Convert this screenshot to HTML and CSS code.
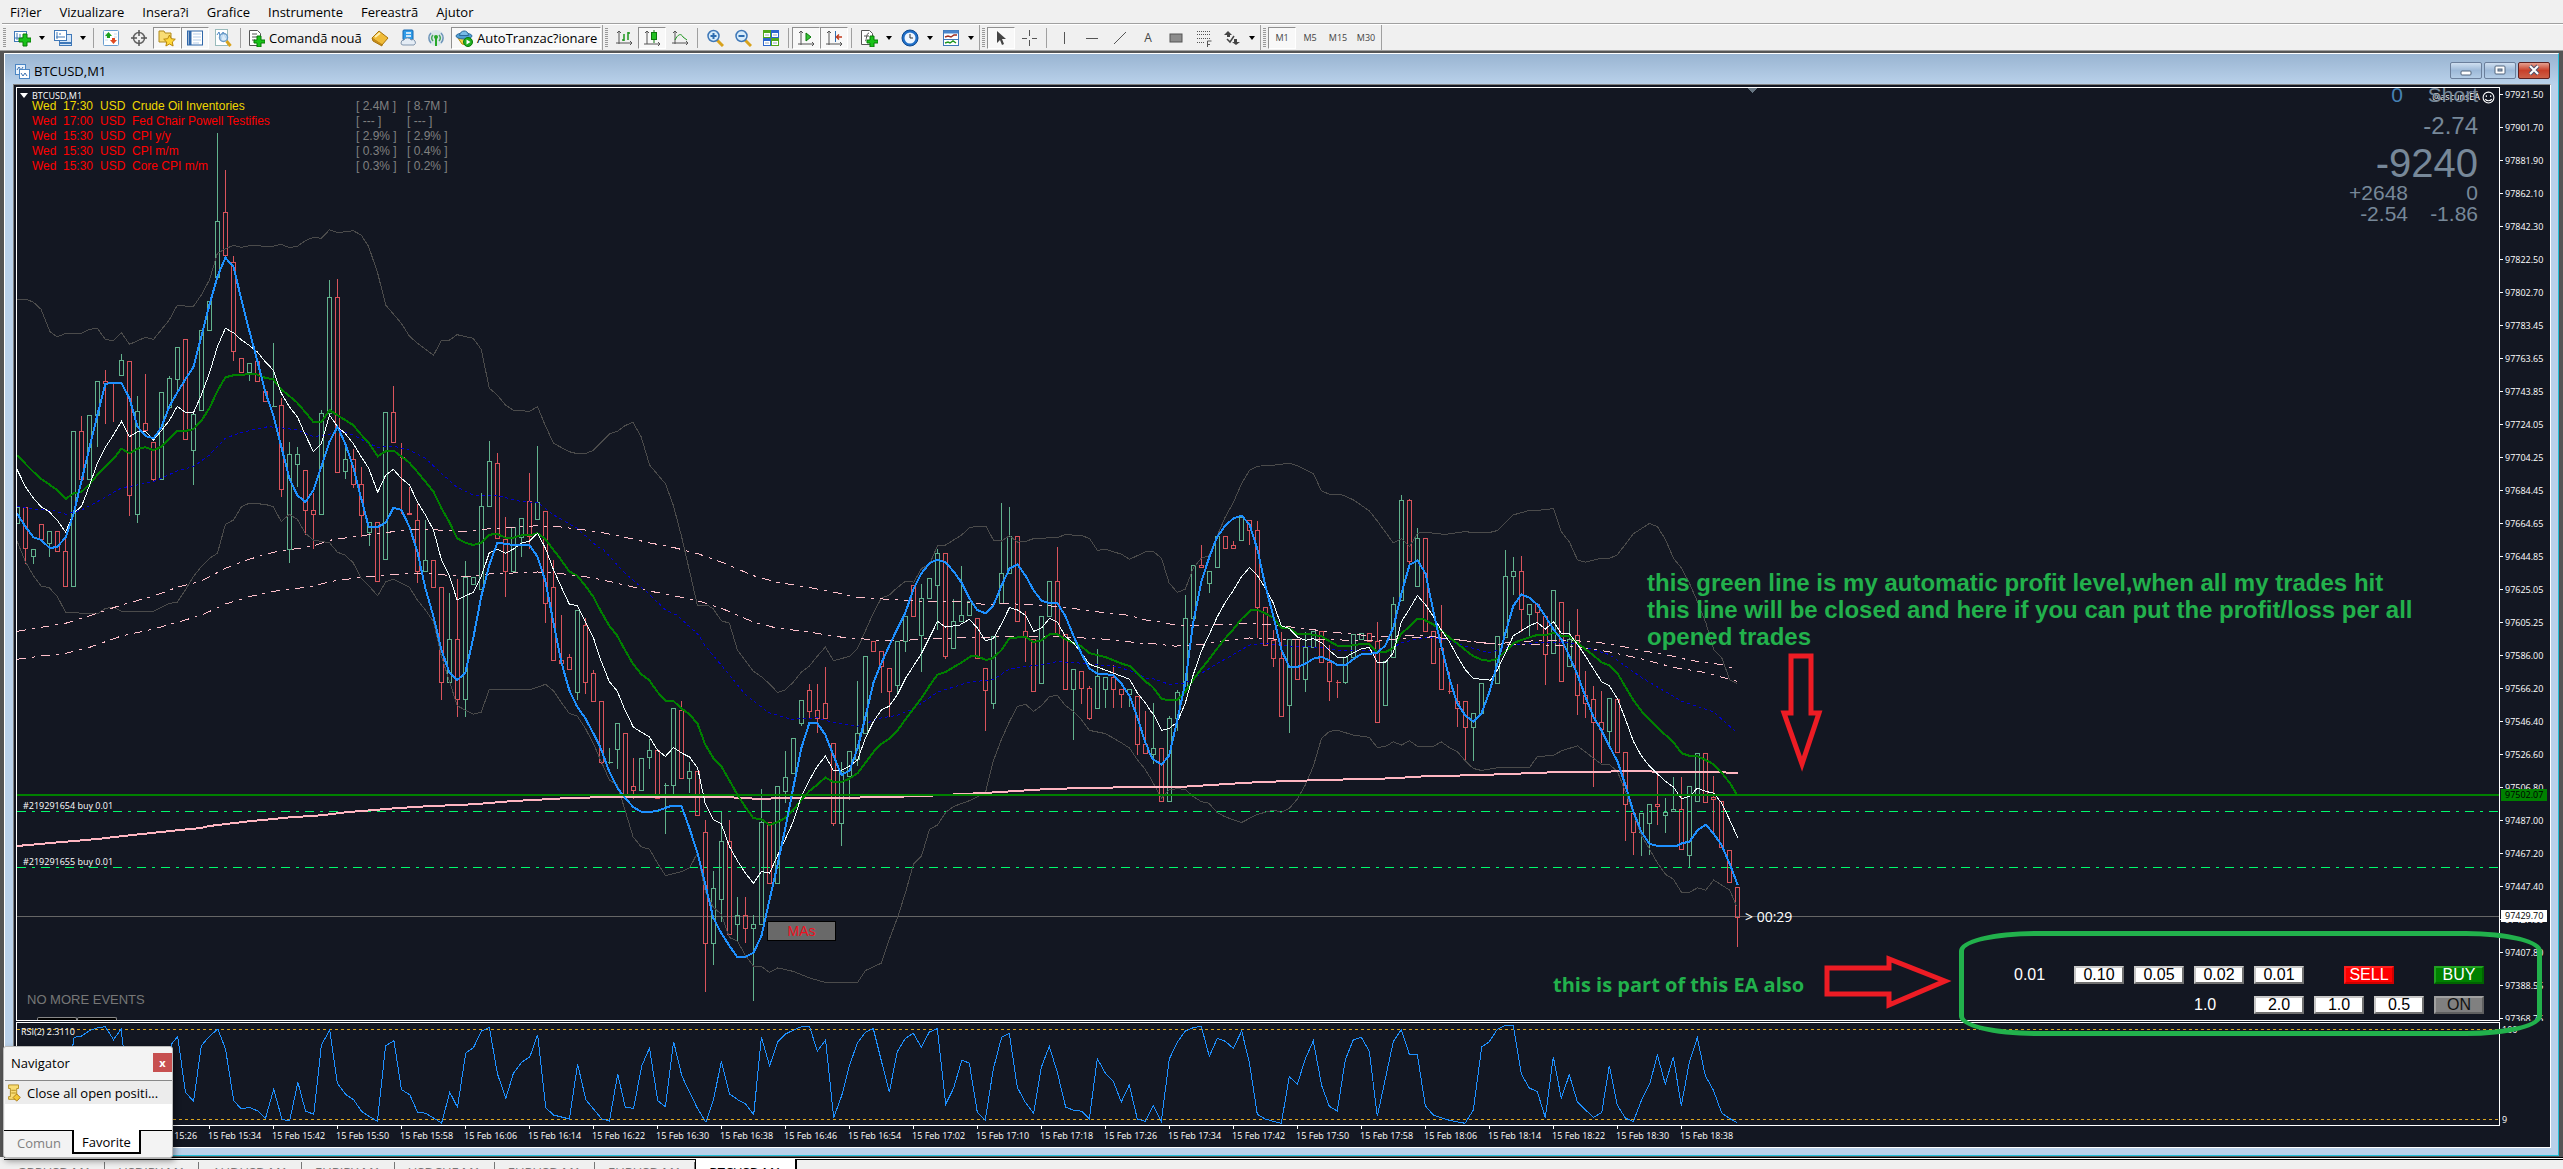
FILE: index.html
```html
<!DOCTYPE html>
<html lang="ro">
<head>
<meta charset="utf-8">
<title>BTCUSD,M1</title>
<link rel="stylesheet" href="styles.css">
</head>
<body>
<nav class="menu">
  <a href="#">Fi?ier</a><a href="#">Vizualizare</a><a href="#">Insera?i</a><a href="#">Grafice</a><a href="#">Instrumente</a><a href="#">Fereastrã</a><a href="#">Ajutor</a>
</nav>

<div class="toolbar">
  <i class="grip"></i>
  <button class="tool" aria-label="New chart"><svg viewBox="0 0 18 18"><rect x="1.500" y="2.500" width="12" height="10" fill="#fff" stroke="#3f78b8"/><path d="M4 4v7M2 9h10M7 5v3" stroke="#3f78b8" fill="none"/><path d="M10 5h4v4h4v4h-4v4h-4v-4H6V9h4z" fill="#19c219" stroke="#087808"/></svg></button><button class="drop" aria-label="More"></button>
  <button class="tool" aria-label="Profiles"><svg viewBox="0 0 18 18"><rect x="5.500" y="5.500" width="12" height="11" fill="#d5e6f8" stroke="#3f78b8"/><path d="M6 14h11" stroke="#3f78b8" stroke-width="2"/><rect x=".5" y="1.500" width="12" height="10" fill="#fff" stroke="#3f78b8"/><path d="M3 3v7M2 8h9M6 4v2" stroke="#3f78b8" fill="none"/></svg></button><button class="drop" aria-label="More"></button>
  <i class="sep"></i>
  <button class="tool" aria-label="Market watch"><svg viewBox="0 0 18 18"><rect x="1.500" y="1.500" width="15" height="15" rx="1" fill="#fff" stroke="#6a9fd0"/><path d="M3 5h3M3 8h3M3 11h3M12 5h3M12 8h3" stroke="#c8dcf0"/><path d="M6.500 3L10 7H8v2H5V7H3z" fill="#1da01d"/><path d="M11.500 15L8 11h2V9h3v2h2z" fill="#e04a20"/></svg></button>
  <button class="tool" aria-label="Crosshair"><svg viewBox="0 0 18 18"><circle cx="9" cy="9" r="5.500" fill="none" stroke="#666" stroke-width="1.500"/><path d="M9 1v6M9 11v6M1 9h6M11 9h6" stroke="#555" stroke-width="1.500"/></svg></button>
  <button class="tool on" aria-label="Navigator"><svg viewBox="0 0 18 18"><path d="M1 2h5l1 2h6v9H1z" fill="#f9dd74" stroke="#b08a1c"/><path d="M11.500 6l1.800 3.700 4 .5-3 2.800.8 4-3.600-2-3.600 2 .8-4-3-2.800 4-.5z" fill="#ffd83a" stroke="#b8860b"/></svg></button>
  <button class="tool on" aria-label="Terminal"><svg viewBox="0 0 18 18"><rect x="1.500" y="2" width="15" height="14" fill="#fff" stroke="#2f66a8"/><path d="M4 2v14" stroke="#2f66a8" stroke-width="3"/><path d="M7 5h8M7 8h8M7 11h8M7 14h6" stroke="#b5cde8"/></svg></button>
  <button class="tool" aria-label="Strategy tester"><svg viewBox="0 0 18 18"><rect x="1.500" y=".5" width="12" height="16" fill="#fff" stroke="#9bb"/><path d="M3 6l2-3 2 8 2-8 3 6" stroke="#4b86c4" fill="none"/><circle cx="9.500" cy="8.500" r="4" fill="#cfe6f8" fill-opacity=".8" stroke="#6b9cc8" stroke-width="1.500"/><path d="M12.500 12l4 5" stroke="#d8a21c" stroke-width="3"/></svg></button>
  <i class="sep"></i>
  <button class="wide order"><svg viewBox="0 0 18 18"><path d="M2.500 1.500h8l3 3v12h-11z" fill="#fff" stroke="#555"/><path d="M5 5h5M5 8h6M5 11h3" stroke="#555"/><path d="M10 7h4v4h4v3h-4v4h-4v-4H7v-3h3z" fill="#19c219" stroke="#087808"/></svg>Comandã nouã</button>
  <button class="tool" aria-label="MetaEditor"><svg viewBox="0 0 18 18"><path d="M1 9l7-7 9 7-6 7z" fill="#f0bc3a" stroke="#a8740c"/><path d="M1 9l1 3 9 5v-2" fill="#c88d1a" stroke="#a8740c"/><path d="M4 8l5-4" stroke="#fff0b0" stroke-width="2"/></svg></button>
  <button class="tool" aria-label="Virtual hosting"><svg viewBox="0 0 18 18"><rect x="4" y="1" width="10" height="10" rx="1" fill="#2f9be8" stroke="#1668b0"/><path d="M7 4h5M7 7h5" stroke="#fff" stroke-width="1.500"/><path d="M2 14a3 3 0 013-3 4 4 0 017 0 2.600 2.600 0 013 5H4a2 2 0 01-2-2z" fill="#e4ecf5" stroke="#8296ad"/></svg></button>
  <button class="tool" aria-label="Signals"><svg viewBox="0 0 18 18"><circle cx="9" cy="9" r="8" fill="#dce6ec"/><path d="M4 14A7 7 0 014 4M14 14a7 7 0 000-10" stroke="#6d94b8" stroke-width="1.500" fill="none"/><path d="M6 12a4.500 4.500 0 010-6M12 12a4.500 4.500 0 000-6" stroke="#48a860" stroke-width="1.500" fill="none"/><circle cx="9" cy="8" r="2" fill="#27a827"/><path d="M9 9v8" stroke="#27a827" stroke-width="2"/></svg></button>
  <button class="wide auto on"><svg viewBox="0 0 18 18"><path d="M3 9h11l-2 7-5-1z" fill="#f5d34a" stroke="#b8860b"/><ellipse cx="9" cy="7" rx="8" ry="3" fill="#4f9fd4" stroke="#2b6a9c"/><path d="M4.500 6.500C5 1 13 0 13.500 6.500z" fill="#77bce8" stroke="#2b6a9c"/><circle cx="13" cy="13" r="4.500" fill="#1fae1f" stroke="#0b780b"/><path d="M11.500 10.500l4 2.500-4 2.500z" fill="#fff"/></svg>AutoTranzac?ionare</button>
  <i class="edge"></i><i class="grip"></i>
  <button class="tool" aria-label="Bar chart"><svg viewBox="0 0 18 18"><path d="M4 2v13M1 14h16M2 4l2-2 2 2M15 12l2 2-2 2" stroke="#555" fill="none"/><path d="M9 5v7M7 11h2M13 3v8M13 4h2" stroke="#1e961e" stroke-width="1.500"/></svg></button>
  <button class="tool on" aria-label="Candlesticks"><svg viewBox="0 0 18 18"><path d="M4 2v13M1 15h16M2 4l2-2 2 2M15 13l2 2-2 2" stroke="#555" fill="none"/><path d="M11 1v13" stroke="#0b780b"/><rect x="8.500" y="3.500" width="5" height="7" fill="#21c021" stroke="#0b780b"/></svg></button>
  <button class="tool" aria-label="Line chart"><svg viewBox="0 0 18 18"><path d="M4 2v13M1 14h16M2 4l2-2 2 2M15 12l2 2-2 2" stroke="#555" fill="none"/><path d="M4 11c3-6 6-7 8-3l4 3" stroke="#1e961e" fill="none"/></svg></button>
  <i class="sep"></i>
  <button class="tool" aria-label="Zoom in"><svg viewBox="0 0 18 18"><path d="M11 11l6 6" stroke="#d8a21c" stroke-width="3"/><circle cx="7.500" cy="7" r="5.500" fill="#d7ecfb" stroke="#3f78b8" stroke-width="1.500"/><path d="M7.500 4v6M4.500 7h6" stroke="#2d6cb0" stroke-width="2"/></svg></button>
  <button class="tool" aria-label="Zoom out"><svg viewBox="0 0 18 18"><path d="M11 11l6 6" stroke="#d8a21c" stroke-width="3"/><circle cx="7.500" cy="7" r="5.500" fill="#d7ecfb" stroke="#3f78b8" stroke-width="1.500"/><path d="M4.500 7h6" stroke="#2d6cb0" stroke-width="2"/></svg></button>
  <button class="tool" aria-label="Tile windows"><svg viewBox="0 0 18 18"><path d="M1 1h8v8H1zM9 9h8v8H9z" fill="#4fa81c"/><path d="M9 1h8v8H9zM1 9h8v8H1z" fill="#2c67cc"/><path d="M2 4h6v4H2zM10 4h6v4h-6zM2 12h6v4H2zM10 12h6v4h-6z" fill="#fff"/><path d="M3 6h4M11 6h4M3 14h4M11 14h4" stroke="#9ab"/></svg></button>
  <i class="sep"></i>
  <button class="tool on" aria-label="Auto scroll"><svg viewBox="0 0 18 18"><path d="M4 2v14M1 15h16M2 4l2-2 2 2M15 13l2 2-2 2" stroke="#555" fill="none"/><path d="M9 4l5 4-5 4z" fill="#35c335" stroke="#0b780b"/></svg></button>
  <button class="tool on" aria-label="Chart shift"><svg viewBox="0 0 18 18"><path d="M4 2v14M1 15h16M2 4l2-2 2 2M15 13l2 2-2 2" stroke="#555" fill="none"/><path d="M10.500 2v11" stroke="#2d6cb0"/><path d="M17 8h-5M14 5.500L11.500 8l2.500 2.500" stroke="#c03a1c" stroke-width="1.500" fill="none"/></svg></button>
  <i class="sep"></i>
  <button class="tool" aria-label="Indicators"><svg viewBox="0 0 18 18"><path d="M1.500 1.500h8l3 3v11h-11z" fill="#fff" stroke="#555"/><path d="M5 12c2 0 1-8 4-8M4 7h5" stroke="#555" fill="none"/><path d="M10 7h4v4h4v3h-4v4h-4v-4H7v-3h3z" fill="#19c219" stroke="#087808"/></svg></button><button class="drop" aria-label="More"></button>
  <button class="tool" aria-label="Periods"><svg viewBox="0 0 18 18"><circle cx="9" cy="9" r="8" fill="#1f6fc8" stroke="#0f4a90"/><circle cx="9" cy="9" r="5.500" fill="#eef6ff"/><path d="M9 5v4h3" stroke="#333" fill="none"/></svg></button><button class="drop" aria-label="More"></button>
  <button class="tool" aria-label="Templates"><svg viewBox="0 0 18 18"><rect x="1.500" y="1.500" width="15" height="15" fill="#fff" stroke="#3f78b8"/><path d="M2 3h14" stroke="#4a86cc" stroke-width="3"/><path d="M2 10.500h14" stroke="#3f78b8"/><path d="M3 8l3-1 3 1 3-2 3 0" stroke="#a03020" fill="none" stroke-width="1.500"/><path d="M3 14l3-1 2 1 3-2 3 2" stroke="#1e961e" fill="none" stroke-width="1.500"/></svg></button><button class="drop" aria-label="More"></button>
  <i class="edge"></i><i class="grip"></i>
  <button class="tool on" aria-label="Cursor"><svg viewBox="0 0 18 18"><path d="M5 2v12l3-3 2 5 2-1-2-5h4z" fill="#444"/></svg></button>
  <button class="tool" aria-label="Crosshair cursor"><svg viewBox="0 0 18 18"><path d="M9.500 1v6M9.500 11v6M2 9.500h5M12 9.500h5" stroke="#555"/></svg></button>
  <i class="sep"></i>
  <button class="tool" aria-label="Vertical line"><svg viewBox="0 0 18 18"><path d="M9.500 3v12" stroke="#555"/></svg></button>
  <button class="tool" aria-label="Horizontal line"><svg viewBox="0 0 18 18"><path d="M3 9.500h12" stroke="#555"/></svg></button>
  <button class="tool" aria-label="Trend line"><svg viewBox="0 0 18 18"><path d="M3 15L15 3" stroke="#555"/></svg></button>
  <button class="tool letter">A</button>
  <button class="tool" aria-label="Rectangle"><svg viewBox="0 0 18 18"><rect x="3" y="5" width="12" height="8" fill="#8c8c8c" stroke="#555"/></svg></button>
  <button class="tool" aria-label="Fibonacci"><svg viewBox="0 0 18 18"><path d="M2 2.500h14M2 5.500h14M2 9.500h14M2 13.500h8" stroke="#555" stroke-dasharray="1 1"/><path d="M12.500 18v-6h4M12 15.500h3" stroke="#555" fill="none"/></svg></button>
  <button class="tool" aria-label="Arrows"><svg viewBox="0 0 18 18"><path d="M5 2l4 4H7v2H4V6H1zM13 16l-4-3h2v-3h3v3h3z" fill="#444"/><path d="M4 10l3 3 4-6" stroke="#444" fill="none" stroke-width="1.500"/></svg></button><button class="drop" aria-label="More"></button>
  <i class="edge"></i><i class="grip"></i>
  <button class="tool on">M1</button><button class="tool">M5</button><button class="tool">M15</button><button class="tool">M30</button>
  <i class="edge"></i>
</div>

<main class="workspace">
  <section class="window">
    <header class="titlebar">
      <svg class="win-icon" viewBox="0 0 15 15"><rect x=".5" y=".5" width="10" height="10" fill="#e8f2fc" stroke="#4b86c4"/><path d="M2 6l2-3 2 3 2-3" stroke="#3a70b0" fill="none"/><rect x="4.500" y="5.500" width="10" height="9" fill="#fff" stroke="#4b86c4"/><path d="M6 9l2 3 2-3 2 3" stroke="#3a70b0" fill="none"/></svg>
      <h1>BTCUSD,M1</h1>
      <div class="win-buttons">
        <button aria-label="Minimize"><svg viewBox="0 0 12 12"><rect x="1" y="7" width="10" height="4" rx="1" fill="#fff" stroke="#50647c"/></svg></button>
        <button aria-label="Maximize"><svg viewBox="0 0 12 12"><rect x="1" y="2" width="10" height="8" rx="1" fill="#fff" stroke="#50647c"/><rect x="4" y="5" width="4" height="2" fill="#9ab" stroke="#50647c"/></svg></button>
        <button class="close" aria-label="Close"><svg viewBox="0 0 12 12"><path d="M2 2l8 8M10 2l-8 8" stroke="#50506a" stroke-width="4"/><path d="M2 2l8 8M10 2l-8 8" stroke="#fff" stroke-width="2"/></svg></button>
      </div>
    </header>

    <div class="chart">
      <div class="pane price">
        <svg class="plot" id="price-plot"></svg>
        <div class="symbol"><i></i>BTCUSD,M1</div>
        <table class="events">
          <tr class="medium"><td>Wed</td><td>17:30</td><td>USD</td><td>Crude Oil Inventories</td><td>[ 2.4M ]</td><td>[ 8.7M ]</td></tr>
          <tr><td>Wed</td><td>17:00</td><td>USD</td><td>Fed Chair Powell Testifies</td><td>[ --- ]</td><td>[ --- ]</td></tr>
          <tr><td>Wed</td><td>15:30</td><td>USD</td><td>CPI y/y</td><td>[ 2.9% ]</td><td>[ 2.9% ]</td></tr>
          <tr><td>Wed</td><td>15:30</td><td>USD</td><td>CPI m/m</td><td>[ 0.3% ]</td><td>[ 0.4% ]</td></tr>
          <tr><td>Wed</td><td>15:30</td><td>USD</td><td>Core CPI m/m</td><td>[ 0.3% ]</td><td>[ 0.2% ]</td></tr>
        </table>
        <span class="order-label first">#219291654 buy 0.01</span>
        <span class="order-label second">#219291655 buy 0.01</span>
        <button class="mas">MAs</button>
        <span class="countdown">&gt; 00:29</span>
        <span class="no-events">NO MORE EVENTS</span>
        <div class="stub"><i></i><i></i></div>
        <div class="expert">@ascunsEA <svg viewBox="0 0 12 12"><circle cx="6" cy="6" r="5" fill="none" stroke="#fff"/><path d="M4 4v1.500M8 4v1.500M3 7.500c1.500 2 4.500 2 6 0" stroke="#fff" fill="none"/></svg></div>
        <div class="stats">
          <span class="zero">0</span><span>Short</span>
          <span class="mid">-2.74</span>
          <span class="big">-9240</span>
          <span>+2648</span><span>0</span>
          <span>-2.54</span><span>-1.86</span>
        </div>
        <div class="trade">
          <div class="row">
            <output>0.01</output><button>0.10</button><button>0.05</button><button>0.02</button><button>0.01</button>
            <button class="sell">SELL</button><button class="buy">BUY</button>
          </div>
          <div class="row">
            <output>1.0</output><button>2.0</button><button>1.0</button><button>0.5</button><button class="toggle">ON</button>
          </div>
        </div>
      </div>
      <div class="axis">
        <ol class="levels">
          <li>97921.50</li><li>97901.70</li><li>97881.90</li><li>97862.10</li><li>97842.30</li><li>97822.50</li><li>97802.70</li><li>97783.45</li><li>97763.65</li><li>97743.85</li><li>97724.05</li><li>97704.25</li><li>97684.45</li><li>97664.65</li><li>97644.85</li><li>97625.05</li><li>97605.25</li><li>97586.00</li><li>97566.20</li><li>97546.40</li><li>97526.60</li><li>97506.80</li><li>97487.00</li><li>97467.20</li><li>97447.40</li><li>97427.60</li><li>97407.80</li><li>97388.55</li><li>97368.75</li>
        </ol>
        <span class="tag target">97502.07</span>
        <span class="tag bid">97429.70</span>
      </div>
      <div class="pane rsi">
        <svg class="plot" id="rsi-plot"></svg>
        <span class="rsi-label">RSI(2) 2.3110</span>
      </div>
      <div class="axis rsi-axis"><span>100</span><span>9</span></div>
      <ol class="times">
        <li></li><li></li><li>15 Feb 15:26</li><li>15 Feb 15:34</li><li>15 Feb 15:42</li><li>15 Feb 15:50</li><li>15 Feb 15:58</li><li>15 Feb 16:06</li><li>15 Feb 16:14</li><li>15 Feb 16:22</li><li>15 Feb 16:30</li><li>15 Feb 16:38</li><li>15 Feb 16:46</li><li>15 Feb 16:54</li><li>15 Feb 17:02</li><li>15 Feb 17:10</li><li>15 Feb 17:18</li><li>15 Feb 17:26</li><li>15 Feb 17:34</li><li>15 Feb 17:42</li><li>15 Feb 17:50</li><li>15 Feb 17:58</li><li>15 Feb 18:06</li><li>15 Feb 18:14</li><li>15 Feb 18:22</li><li>15 Feb 18:30</li><li>15 Feb 18:38</li>
      </ol>

      <p class="note profit">this green line is my automatic profit level,when all my trades hit<br>this line will be closed and here if you can put the profit/loss per all<br>opened trades</p>
      <svg class="arrow down" viewBox="0 0 48 120"><path d="M13 4h20v57h8L24 112 6 61h7z"/></svg>
      <p class="note ea">this is part of this EA also</p>
      <svg class="arrow right" viewBox="0 0 130 56"><path d="M4 14h62V5l56 22-56 24V40H4z"/></svg>
      <div class="ring"></div>
    </div>
  </section>
</main>

<aside class="navigator">
  <header><h2>Navigator</h2><button aria-label="Close">x</button></header>
  <ul><li><svg viewBox="0 0 16 20"><path d="M2 1h11v4h-2v9h2v3H2v-3h2V5H2z" fill="#f9dd74" stroke="#b08a1c"/><path d="M5 7h5M5 10h5" stroke="#b08a1c"/><path d="M11 11l4 4-4 4-4-4z" fill="#f3c936" stroke="#a8740c"/></svg>Close all open positi...</li></ul>
  <nav><a href="#">Comun</a><a href="#" class="active">Favorite</a></nav>
</aside>

<nav class="tabs">
  <a href="#">GBPUSD,M1</a><a href="#">USDJPY,M1</a><a href="#">AUDUSD,M1</a><a href="#">EURJPY,M1</a><a href="#">USDCHF,M1</a><a href="#">EURUSD,M1</a><a href="#">EURUSD,M1</a><a href="#" class="active">BTCUSD,M1</a>
</nav>
<script src="chart.js"></script>
</body>
</html>
```
FILE: styles.css
```css
* { box-sizing: border-box; }
body {
  margin: 0;
  height: 100vh;
  overflow: hidden;
  display: flex;
  flex-direction: column;
  position: relative;
  background: #f0f0f0;
  font: 13px "Open Sans", "Noto Sans", sans-serif;
  color: #000;
}
button { font: inherit; padding: 0; border: 0; background: none; color: inherit; }
a { color: inherit; text-decoration: none; }
ol, ul { list-style: none; margin: 0; padding: 0; }
h1, h2, p { margin: 0; font: inherit; }

/* Menu and toolbar */
.menu {
  flex: 0 0 24px;
  display: flex;
  gap: 18px;
  align-items: center;
  padding: 2px 10px 0 8px;
  margin-left: 2px;
  border-bottom: 1px solid #a0a0a0;
  line-height: 19px;
}
.toolbar {
  flex: 0 0 26px;
  display: flex;
  align-items: center;
  margin-left: 2px;
  border-top: 1px solid #fff;
  color: #444;
}
.grip { width: 3px; height: 20px; margin: 0 2px 0 1px; background: repeating-linear-gradient(#999 0 1px, #f0f0f0 1px 2px); }
.sep, .edge { width: 1px; height: 20px; margin: 0 3px; background: #a0a0a0; }
.edge { height: 25px; margin: 0 1px; }
.tool {
  width: 28px;
  height: 22px;
  display: flex;
  align-items: center;
  justify-content: center;
  font-size: 9px;
}
.tool svg, .wide svg { width: 18px; height: 18px; flex: none; }
.letter { font-size: 12px; }
.on { background: #f8f8f8; border: 1px solid; border-color: #909090 #fff #fff #909090; }
.drop { width: 11px; height: 22px; margin-right: 2px; display: flex; align-items: center; justify-content: center; }
.drop::before { content: ""; border: 3px solid transparent; border-top: 4px solid #000; border-bottom: 0; }
.wide { height: 22px; display: flex; align-items: center; gap: 4px; color: #000; white-space: nowrap; }
.order { width: 122px; padding-left: 3px; }
.auto { width: 150px; margin-left: 1px; padding-left: 3px; }

/* Chart window */
.workspace { flex: 1; min-height: 0; display: flex; padding: 0 4px 1px 4px; background: #555; border-top: 1px solid #a0a0a0; }
.window {
  flex: 1;
  display: flex;
  flex-direction: column;
  margin-top: 2px;
  padding: 0 7px 7px 8px;
  background: #b9d1ea;
  border: 1px solid #fff;
  border-right: 1px solid #22c0d8;
  border-bottom: 1px solid #22c0d8;
}
.titlebar {
  flex: 0 0 30px;
  margin: 0 -7px 0 -8px;
  padding: 4px 8px 0 10px;
  display: flex;
  align-items: center;
  gap: 4px;
  background: linear-gradient(#99b4d1, #b9d1ea);
}
.titlebar h1 { flex: 1; }
.win-icon { width: 15px; height: 15px; }
.win-buttons { display: flex; gap: 2px; padding-bottom: 2px; }
.win-buttons button { width: 32px; height: 17px; border: 1px solid #6b7f9b; border-radius: 2px; background: linear-gradient(#cfdff0, #9db9d8 50%, #b4cde6); display: flex; align-items: center; justify-content: center; }
.win-buttons .close { background: linear-gradient(#e5a090, #c8402a 50%, #cc6048); border-color: #5c2020; }
.win-buttons svg { width: 12px; height: 12px; }

.chart {
  flex: 1;
  min-height: 0;
  position: relative;
  display: grid;
  grid-template-columns: 1fr 50px;
  grid-template-rows: 1fr 104px 20px;
  row-gap: 1px;
  padding: 2px 0 0 2px;
  border-top: 1px solid #808080;
  border-left: 1px solid #808080;
  border-right: 1px solid #fff;
  border-bottom: 1px solid #fff;
  background: #131722;
  color: #fff;
  font-size: 9px;
  white-space: nowrap;
}
.pane { position: relative; overflow: hidden; border: 1px solid #fff; min-height: 0; }
.plot { position: absolute; inset: 0; width: 100%; height: 100%; display: block; }
.plot * { fill: none; shape-rendering: crispEdges; }
.up { stroke: #62b28d; }
.down-bar { stroke: #d9545c; }
.band { stroke: #4b4b4b; }
.fast { stroke: #1e90ff; stroke-width: 2; }
.rsi-line { stroke: #1e90ff; }
.slow { stroke: #008000; stroke-width: 2; }
.white { stroke: #f4ffff; }
.navy { stroke: #0000cd; stroke-dasharray: 3 3; }
.dotted { stroke: #ffc0cb; stroke-dasharray: 9 6 3 6; }
.long { stroke: #ffb6c1; stroke-width: 2; }
.order-line { stroke: #00fa6c; stroke-dasharray: 9 6 3 6; }
.target-line { stroke: #008000; stroke-width: 2; }
.bid-line { stroke: #666; }
.level { stroke: #daa520; stroke-dasharray: 3 3; }
.plot .shift { fill: #667480; }

.symbol { position: absolute; left: 3px; top: 1px; display: flex; align-items: center; gap: 4px; font-size: 9px; line-height: 13px; }
.symbol i { border: 4px solid transparent; border-top: 5px solid #fff; border-bottom: 0; }
.events { position: absolute; left: 15px; top: 11px; border-collapse: collapse; font: 12px/15px "Liberation Sans", Arial, sans-serif; color: #f00; table-layout: fixed; width: 426px; }
.events td { padding: 0; height: 15px; width: 51px; color: #808080; }
.events td:nth-child(-n+4) { color: inherit; }
.events td:nth-child(1) { width: 31px; }
.events td:nth-child(2) { width: 37px; }
.events td:nth-child(3) { width: 32px; }
.events td:nth-child(4) { width: 224px; }
.medium { color: #f0d800; }
.order-label { position: absolute; left: 6px; font-size: 9px; line-height: 12px; }
.first { top: 712px; }
.second { top: 768px; }
.mas { position: absolute; left: 750px; top: 833px; width: 69px; height: 20px; background: #696969; border: 1px solid #000; color: #f01020; font: 14px/18px "Liberation Sans", Arial, sans-serif; }
.countdown { position: absolute; left: 1728px; top: 820px; font-size: 14px; line-height: 18px; }
.no-events { position: absolute; left: 10px; bottom: 12px; font: 13px/16px "Liberation Sans", Arial, sans-serif; color: #777; }
.stub { position: absolute; left: 20px; bottom: 0; display: flex; }
.stub i { width: 40px; height: 3px; border: 1px solid #888; border-bottom: 0; background: #000; border-radius: 2px 2px 0 0; }
.expert { position: absolute; right: 4px; top: 2px; display: flex; gap: 2px; align-items: center; line-height: 14px; }
.expert svg { width: 13px; height: 13px; }
.stats {
  position: absolute;
  right: 21px;
  top: -6px;
  display: grid;
  grid-template-columns: auto 70px;
  grid-template-rows: 26px 36px 38px 22px 20px;
  justify-items: end;
  align-items: center;
  font: 21px/20px "Liberation Sans", Arial, sans-serif;
  color: #778899;
}
.zero { color: #4682b4; margin-right: 5px; }
.stats .mid, .stats .big { grid-column: 1 / 3; }
.stats .mid { font-size: 24px; }
.stats .big { font-size: 40px; }

.trade { position: absolute; right: 15px; bottom: 6px; display: grid; gap: 12px; font: 16px/14px "Liberation Sans", Arial, sans-serif; }
.row { display: flex; gap: 10px; justify-content: flex-end; }
.row output { width: 50px; line-height: 18px; }
.row button { width: 50px; height: 18px; background: #fff; color: #000; border: 2px solid; border-color: #c8c8c8 #707070 #707070 #c8c8c8; }
.row .sell, .row .buy { margin-left: 30px; color: #fff; }
.row .sell { background: #f00; border-color: #ff2020 #d00000 #d00000 #ff2020; }
.row .buy { background: #008000; border-color: #20a020 #006400 #006400 #20a020; }
.row .toggle { background: #808080; border-color: #a0a0a0 #606060 #606060 #a0a0a0; color: #111; }

.axis { position: relative; overflow: hidden; min-height: 0; line-height: 11px; }
.levels { margin-top: -9px; }
.levels li { height: 33px; line-height: 33px; padding-left: 5px; background: linear-gradient(#fff, #fff) 0 16px / 3px 1px no-repeat; }
.tag { position: absolute; left: 1px; width: 46px; padding-left: 4px; line-height: 12px; }
.target { top: 702px; background: #008000; color: #000; }
.bid { top: 823px; background: #fff; color: #000; }
.rsi-axis { display: flex; flex-direction: column; justify-content: space-between; padding: 2px 2px 1px; }
.rsi-label { position: absolute; left: 4px; top: 2px; line-height: 14px; }
.times { grid-column: 1 / 3; display: flex; margin-top: -1px; overflow: hidden; }
.times li { flex: 0 0 64px; height: 20px; line-height: 19px; background: linear-gradient(#fff, #fff) 1px 0 / 1px 3px no-repeat; }

/* Annotations drawn over the chart */
.note { position: absolute; color: #22b14c; font-weight: bold; }
.profit { left: 1633px; top: 484px; font: bold 24px/27px "Liberation Sans", Arial, sans-serif; }
.ea { left: 1539px; top: 887px; font-size: 20px; line-height: 26px; }
.arrow { position: absolute; fill: none; stroke: #ed1c24; stroke-width: 5; }
.arrow.down { left: 1764px; top: 567px; width: 48px; height: 120px; }
.arrow.right { left: 1809px; top: 869px; width: 130px; height: 56px; }
.ring { position: absolute; right: 8px; bottom: 111px; width: 583px; height: 105px; border: 5px solid #22b14c; border-radius: 76px / 20px; }

/* Floating navigator */
.navigator { position: absolute; left: 3px; bottom: 11px; width: 170px; height: 112px; display: flex; flex-direction: column; background: #f3f3f3; border: 1px solid #bbb; border-radius: 3px; box-shadow: 2px 3px 6px rgba(0, 0, 0, .4); }
.navigator header { flex: 0 0 33px; display: flex; align-items: center; padding: 0 0 2px 7px; }
.navigator h2 { flex: 1; }
.navigator button { width: 19px; height: 19px; background: #c75050; color: #fff; font-size: 11px; font-weight: bold; line-height: 16px; }
.navigator ul { flex: 1; margin-left: 1px; background: #fff; border-top: 1px solid #888; }
.navigator li { height: 23px; display: flex; align-items: center; gap: 5px; padding-left: 1px; background: #ececec; white-space: nowrap; }
.navigator li svg { width: 16px; height: 18px; }
.navigator nav { flex: 0 0 27px; display: flex; align-items: flex-start; border-top: 1px solid #000; color: #808080; }
.navigator nav a { height: 23px; line-height: 24px; width: 68px; padding-left: 13px; }
.navigator nav .active { margin-top: -1px; height: 24px; width: 69px; padding: 0; text-align: center; background: #fff; color: #000; border: 2px solid #000; border-top: 0; }

/* Document tabs */
.tabs { flex: 0 0 12px; display: flex; overflow: hidden; margin-left: 4px; padding-top: 2px; border-top: 1px solid #000; background: linear-gradient(#fff 0 1px, #000 1px 2px, #f0f0f0 2px); color: #777; }
.tabs a { flex: 0 0 auto; height: 22px; line-height: 20px; padding: 0 13px; border-right: 1px solid #777; margin-top: 2px; }
.tabs .active { margin-top: -1px; padding-top: 3px; background: #fff; color: #000; border-left: 1px solid #000; border-right: 2px solid #000; }
```
FILE: chart.js
```js
// Bars are 8px apart. History is stored in three segments, each with its own origin and scale.
const BAR = 8;
const ORIGIN = { x: 17, y: 88 };
const SEGMENTS = [
  { x: 0, y: 180, kx: 2.24, ky: 3, first: 0 },
  { x: 600, y: 450, kx: 2.613, ky: 2.8, first: 75 },
  { x: 1150, y: 450, kx: 2.613, ky: 2.958, first: 148 }
];

// direction, body top, body bottom, high, low
const CANDLES = [
  "u,980,1030;d,980,1105,,1148;u,1108,1127,,1148;d,1033,1078;u,1054,1090,,1127;d,1054,1114;d,1114,1219,1070;u,754,1219;d,754,898,705;u,706,898;u,604,706,,797;d,604,608,567,728;d,608,608,,722;u,541,586,519;d,544,946,,1004;u,694,1003,645,1025;d,730,751,578;d,787,898,,902;u,637,898;u,595,682,585;u,502,598,,640;d,478,778;u,703,811,,911;u,451,691;u,364,451;u,124,290,-144;d,97,226,-33;d,247,514,225,540;d,535,577;u,550,577,,601;d,544,604;d,634,664;u,678,678,486;d,676,928,652,947;u,823,1108,783,1145;u,823,853,798,917;d,871,991,,1063;d,991,1003,937,1105;u,700,1003,687;u,352,700,297;d,352,877,294;u,838,874,790,893;d,838,913,804,920;d,913,1006,858,1068;u,1027,1057,,1094;d,1027,1204;u,697,1138;d,697,787,615;d,832,832,787,1000;d,1000,1003,918;d,1021,1174,970,1205;u,1141,1174,1018;d,1141,1222;d,1222,1507,,1556;u,1378,1507,1237;d,1378,1558,1195,1608;u,1192,1558,1140,1608;u,1192,1213;u,979,1228,937;u,844,979,780;d,850,1075,816;d,1078,1174,1008,1247;u,1042,1174;u,1015,1072,,1127;d,964,1069,877,1105;u,967,1018,795;d,994,1270,,1326;d,1222,1441,1137;d,1441,1448,1302;d,1432,1468,1419;u,1291,1537,,1556;d,1336,1507,1310,1538;d,1480,1564,1467;d,1564,1745,,1748;u,1745,1745,1701,1748",
  "u,765,838,,890;d,791,968;d,942,953,860,975;u,861,953;u,841,860,807,890;d,841,975;u,939,939,930,1072;u,723,939,,960;d,729,919,700;u,900,919,872,958;d,900,1023;d,1070,1379,1033,1515;u,1225,1379,1175,1439;u,1096,1258,1012,1318;d,1096,1356,1033;u,1303,1326,1249,1375;d,1303,1337,1249,1378;u,1328,1337,1299,1540;u,1042,1328,946;d,1042,1211;u,942,1211;u,916,956,840,985;u,807,903;u,701,765,,770;d,673,732,652,749;d,729,749,652,790;d,707,749,605;d,819,1045,,1049;u,900,1045,872,1106;u,844,914,,978;u,791,866,644,882;u,578,791;d,536,564;d,564,604,,678;d,611,676,,745;u,536,659,,680;u,466,536,,562;d,379,464;u,415,519,372,619;u,357,415;u,289,379,275,500;d,287,578,,582;u,480,555,414;u,463,480,322;u,424,463;d,469,583;d,611,673,,783;u,522,707,,722;u,343,427,146;u,242,343,157;d,242,480;d,508,522,447,591;d,530,676;u,466,653;u,368,466;d,368,516,269;d,516,670;u,614,670,,809;d,620,667,,708;d,667,749,658,752;u,634,723,555;u,636,670,,720;d,636,670,599,720;d,670,684,,720;u,670,684,,717;d,690,822,,850;d,822,849,728;u,833,850,706,875;d,833,984;u,749,984,743;u,678,749,670,783;u,471,670,404;u,323,471",
  "d,341,345,278;u,359,392,,420;u,255,345;d,255,289;d,282,291,266;u,197,267;d,208,238,,278;d,238,463,208,553;d,463,578;d,563,616,530,638;d,616,786,535;u,560,755,,833;d,560,678;u,584,678,535,712;u,536,584;d,536,628;d,628,684,575,740;d,687,687,678,730;u,613,687,,690;u,544,613;u,542,560;d,542,566;d,566,806,506;u,625,755;u,457,613,432;u,149,445,130;d,149,329,142,335;u,261,403,228;d,261,536;d,536,631;d,587,708,457;d,712,714,655,718;d,741,762,690,817;d,741,818,,920;u,779,818,,917;u,690,779;;u,551,690;u,374,554,293;u,359,374,314,426;d,359,471,311,535;u,457,486,,550;d,457,480,,530;d,492,602,,692;u,415,599;d,451,684;u,560,640,503;d,548,726,467,781;d,726,747,651,790;d,738,806,695,994;d,806,825,710,923;u,735,832,,868;d,738,892;d,892,1048,,1154;d,1075,1131,,1195;u,1075,1131,,1198;u,1048,1102,,1195;d,1048,1052,958,1106;u,1070,1081,1027,1130;u,1063,1069,964;d,1063,1181,964;u,995,1199,,1231;u,897,1039;d,897,1042;d,1025,1031,962,1128;d,1039,1175;d,1184,1279;d,1294,1380,,1467"
];

const LINES = [
  ["band", [
    "38,358 60,358 75,367 92,388 112,455 128,471 147,460 183,460 201,448 218,445 236,478 254,482 272,458 290,493 326,472 344,478 379,420 397,376 433,380 451,345 469,300 487,220 505,206 523,196 541,202 558,197 612,199 630,193 648,203 666,199 684,182 702,172 720,175 738,149 756,158 791,152 809,165 826,200 846,280 864,375 899,430 917,468 935,490 971,526 989,481 1006,481 1024,464 1060,475 1078,508 1096,625 1114,645 1132,675 1150,691 1186,694 1204,680 1222,738 1240,790 1275,815 1293,821 1311,821 1329,811 1365,762 1383,754 1400,737 1418,727 1436,770 1455,855 1491,912 1508,975 1526,1065 1545,1175 1562,1275",
    "255,434 280,434 296,445 317,478 338,485 359,560 380,590 401,620 422,635 443,655 464,679 484,672 505,650 526,622 547,605 568,577 589,552 610,590 652,578 673,555 694,505 715,455 735,415 756,406 777,385 798,368 820,370 840,332 861,320 882,268 903,266 945,238 965,217 986,214 1009,214 1028,252 1049,255 1070,240 1091,258 1112,256 1133,248 1195,245 1216,237 1260,240 1279,248 1300,281 1321,278 1363,292 1384,306 1425,285 1430,284",
    "10,301 30,320 50,393 71,421 92,412 113,350 134,320 154,313 175,255 196,200 218,155 239,100 260,60 281,48 322,45 364,39 385,46 427,70 448,121 469,131 500,132 531,147 573,180 594,210 636,275 657,262 678,286 699,246 720,243 770,250 824,241 845,245 887,244 908,238 949,192 991,179 1033,177 1054,173 1075,242 1096,272 1117,325 1138,332 1175,321 1200,321 1221,310 1263,248 1305,217 1326,227 1347,265 1368,320 1389,350 1410,395 1431,450 1452,510 1473,590 1494,615 1515,680 1533,690"]],
  ["band", [
    "38,1083 57,1145 75,1188 92,1218 110,1223 128,1248 147,1297 218,1302 236,1285 254,1282 272,1294 344,1294 379,1270 397,1267 415,1230 433,1190 451,1160 469,1135 487,1120 505,1033 523,1020 541,980 558,970 594,973 612,980 630,1025 648,1003 666,1018 684,1060 702,1080 738,1088 756,1117 773,1125 791,1148 809,1195 826,1217 846,1247 864,1205 881,1198 917,1222 935,1260 953,1290 971,1325 989,1430 1006,1500 1024,1577 1060,1603 1078,1597 1096,1528 1186,1530 1222,1513 1240,1533 1257,1567 1275,1600 1293,1608 1311,1645 1329,1690 1347,1745 1365,1800 1383,1815 1400,1890 1418,1970 1436,2000 1455,2008 1473,2050 1491,2087 1526,2075 1545,2063 1562,2020",
    "255,1133 275,1235 296,1280 317,1300 338,1365 359,1375 380,1415 401,1445 422,1446 443,1463 464,1450 505,1460 547,1478 589,1491 673,1491 694,1457 735,1437 756,1370 777,1310 798,1240 819,1160 840,1137 861,1062 882,1050 903,1015 924,998 965,982 1007,960 1028,870 1049,810 1070,760 1091,718 1112,712 1133,732 1154,715 1175,690 1195,687 1216,715 1237,732 1258,755 1279,785 1321,794 1363,820 1384,835 1404,867 1425,895 1436,915",
    "0,968 30,1030 50,1005 71,1002 92,1004 113,1025 134,1040 154,1045 175,1072 196,1085 239,1102 281,1078 322,1065 343,1072 364,1060 385,1033 406,990 427,935 448,853 469,832 490,829 531,843 573,850 594,880 615,877 636,863 657,873 678,860 699,877 740,877 761,863 782,880 803,892 824,920 845,942 866,948 908,940 991,940 1012,907 1054,903 1075,890 1117,875 1159,912 1180,930 1200,930 1221,950 1242,1010 1263,1075 1284,1140 1305,1180 1326,1222 1347,1255 1368,1270 1389,1309 1410,1308 1431,1295 1452,1302 1473,1272 1515,1302 1533,1350"]],
  ["navy", [
    "38,978 75,988 120,992 147,1003 183,990 218,965 272,924 344,905 397,873 433,860 469,825 505,775 541,757 600,740 630,743 666,750 702,770 738,763 756,750 791,765 826,790 846,802 881,798 917,810 953,835 989,880 1024,922 1060,945 1110,945 1168,965 1204,967 1240,1005 1293,1045 1340,1102",
    "10,280 60,340 130,405 171,448 200,462 255,515 275,548 338,630 380,685 440,735 500,754 568,750 610,763 673,773 735,750 777,743 819,725 882,678 965,650 1028,643 1070,613 1112,606 1154,602 1195,592 1258,597 1342,605 1384,617 1430,640",
    "0,673 50,693 92,690 175,632 260,577 301,572 364,580 448,584 490,593 552,592 615,598 657,570 720,554 761,558 824,580 887,600 949,577 1033,568 1096,570 1200,605 1284,673 1389,743 1473,775 1530,832"]],
  ["dotted", [
    "38,1354 92,1342 147,1330 201,1307 272,1275 344,1248 397,1222 451,1203 505,1165 558,1138 612,1117 702,1098 738,1081 809,1067 864,1058 917,1048 971,1049 1042,1055 1096,1046 1150,1042 1204,1037 1257,1041 1311,1050 1340,1057",
    "0,230 60,243 130,260 192,273 255,290 320,315 401,352 460,370 547,385 610,398 670,412 750,418 840,424 945,424 1007,433 1070,430 1195,438 1300,453 1384,463 1430,477",
    "0,503 66,518 130,520 196,516 260,513 343,520 430,532 490,540 573,550 615,552 700,547 760,555 845,567 908,573 980,566 1054,562 1096,562 1200,573 1284,593 1368,610 1410,622 1494,635 1536,650"]],
  ["dotted", [
    "38,1438 92,1428 147,1420 201,1402 272,1368 344,1347 397,1327 451,1306 505,1272 558,1250 612,1234 702,1219 738,1205 809,1192 864,1186 917,1180 971,1182 1042,1190 1096,1182 1204,1176 1257,1181 1311,1190 1340,1197",
    "0,362 60,377 130,395 192,408 255,422 317,443 401,482 460,498 547,510 630,524 720,532 798,533 840,529 945,526 1070,522 1195,523 1300,528 1384,537 1430,543",
    "0,572 66,580 130,576 196,564 260,556 343,560 430,560 531,563 615,562 700,553 760,556 845,567 908,576 980,575 1096,580 1200,597 1284,618 1368,643 1450,658 1494,672 1536,685"]],
  ["long", [
    "38,1998 147,1985 218,1977 290,1966 397,1951 451,1944 469,1938 558,1924 651,1912 720,1906 774,1897 830,1891 884,1885 955,1879 1060,1873 1150,1863 1222,1858 1275,1854 1340,1852",
    "0,973 50,971 317,971 401,976 600,975 840,969 1007,960 1070,956 1175,949 1290,946 1430,943",
    "0,997 90,996 200,988 290,982 450,976 635,971 720,965 850,962 990,956 1060,953 1180,952 1230,950 1490,953 1536,956"]],
  ["slow", [
    "38,826 75,876 92,897 110,913 128,930 147,957 165,940 183,935 201,912 218,885 254,837 272,806 290,820 308,806 326,802 344,811 361,800 397,753 418,752 433,748 451,722 469,685 487,633 505,592 525,585 573,582 590,592 612,598 630,628 666,668 684,697 702,726 720,726 738,690 756,706 773,720 791,735 809,764 826,788 846,829 864,814 884,814 917,848 935,876 953,905 971,935 989,985 1006,1025 1024,1075 1042,1088 1060,1095 1078,1088 1096,1064 1114,1062 1132,1073 1150,1073 1168,1066 1190,1065 1204,1059 1222,1078 1240,1110 1257,1140 1275,1174 1293,1187 1311,1217 1329,1250",
    "0,447 24,492 45,520 66,562 87,600 108,628 129,645 150,677 171,702 192,703 213,724 234,740 255,767 275,825 296,862 317,886 338,925 359,965 380,1000 401,1031 422,1034 443,1050 464,1042 484,1030 505,1008 526,980 547,955 568,937 589,917 610,930 631,930 652,920 673,905 694,875 715,845 735,823 760,805 777,785 798,755 819,725 840,695 861,660 882,629 903,622 924,608 945,595 970,577 986,578 1010,588 1028,582 1049,560 1070,527 1112,523 1133,538 1154,533 1175,516 1195,516 1216,530 1258,550 1279,569 1321,580 1363,598 1384,605 1404,626 1430,652",
    "0,694 10,705 30,736 50,740 71,740 92,715 113,680 134,648 154,620 175,588 196,558 218,530 239,500 265,472 281,473 301,483 322,496 343,525 364,527 385,544 417,545 448,551 469,566 490,579 515,580 552,574 573,574 594,599 615,598 636,585 657,543 678,522 699,499 715,501 740,516 761,532 782,555 803,572 824,592 845,610 866,620 887,624 908,618 929,595 949,572 970,562 1012,547 1033,548 1054,541 1075,550 1096,551 1117,570 1138,590 1159,608 1180,628 1200,637 1221,660 1242,700 1263,740 1284,772 1305,798 1326,822 1347,843 1368,865 1389,897 1410,905 1431,906 1452,917 1473,930 1494,955 1515,985 1533,1018"]],
  ["white", [
    "38,868 57,920 75,955 92,980 110,995 128,1020 147,1056 165,1000 183,978 201,915 218,850 236,802 254,765 272,724 290,770 308,755 326,754 344,780 361,752 379,722 397,679 415,697 433,699 451,645 469,580 487,500 505,445 523,458 541,480 558,496 576,515 594,545 612,570 630,640 648,680 666,710 684,765 702,815 720,790 738,705 756,740 773,760 791,790 809,830 826,865 846,937 864,885 881,868 899,895 917,915 935,965 953,1005 971,1050 989,1140 1006,1185 1024,1260 1042,1248 1060,1237 1078,1190 1096,1118 1114,1107 1132,1120 1150,1107 1168,1090 1186,1083 1204,1060 1222,1105 1240,1170 1257,1220 1275,1272 1293,1277 1311,1325 1329,1372",
    "0,583 24,648 45,675 66,730 87,776 108,790 129,803 150,840 171,858 192,833 213,848 234,860 255,890 275,990 296,1035 317,1047 338,1110 359,1150 380,1185 401,1213 422,1180 443,1185 464,1135 484,1090 505,1040 526,970 547,925 568,885 589,857 610,897 631,897 652,885 673,868 694,805 715,760 735,728 756,717 777,685 798,640 819,605 840,570 861,525 882,480 903,496 940,490 965,474 986,498 1007,534 1028,528 1049,487 1070,441 1091,448 1112,463 1133,508 1154,498 1175,471 1195,482 1216,522 1237,540 1258,568 1279,600 1300,608 1342,625 1384,642 1404,680 1430,715",
    "0,770 10,783 30,829 50,824 71,805 92,750 113,665 134,595 154,548 175,495 196,452 218,415 239,375 260,348 281,372 301,408 322,452 343,520 364,528 385,553 406,563 427,558 448,570 469,593 490,613 511,613 531,600 552,588 573,584 594,628 615,628 636,600 657,508 678,470 699,430 720,458 740,492 761,532 782,567 803,610 824,650 845,676 890,681 908,650 929,600 949,550 970,535 991,520 1012,510 1033,530 1054,508 1075,543 1096,543 1117,575 1138,610 1159,648 1180,685 1200,697 1221,735 1242,795 1263,862 1284,905 1305,935 1326,958 1347,980 1368,997 1389,1032 1410,1024 1431,1000 1452,1010 1473,1015 1494,1045 1515,1095 1536,1147"]],
  ["fast", [
    "38,1000 57,1040 75,1072 92,1080 112,1105 128,1100 147,1073 165,1000 183,900 201,800 218,706 236,612 250,608 272,609 290,655 308,740 326,768 344,775 361,743 379,680 397,638 415,598 433,562 451,470 469,375 487,290 505,233 523,260 541,360 558,450 576,540 594,635 612,705 630,800 648,895 666,946 684,966 702,930 720,860 738,785 756,740 773,790 791,860 809,955 826,1041 846,1041 864,1028 881,984 899,989 917,1040 935,1115 953,1225 971,1310 989,1410 1006,1475 1024,1500 1042,1480 1060,1375 1078,1250 1096,1155 1114,1088 1150,1095 1186,1095 1204,1130 1222,1205 1240,1330 1257,1445 1275,1530 1293,1580 1311,1615 1329,1660",
    "0,830 24,900 45,945 66,975 87,1000 108,1013 129,1014 150,1010 188,996 213,997 234,1060 255,1130 275,1215 296,1310 317,1353 338,1388 358,1419 380,1419 401,1408 422,1360 443,1260 464,1160 484,1060 505,945 526,835 547,765 568,765 589,798 610,855 631,910 652,898 673,835 694,745 715,650 735,597 756,548 777,500 798,455 819,390 840,345 861,317 882,307 903,315 924,340 945,372 965,415 986,448 1007,457 1028,435 1049,380 1070,332 1091,321 1112,352 1133,393 1154,422 1175,429 1195,429 1216,465 1237,520 1258,570 1279,612 1300,626 1342,630 1363,655 1384,690 1404,748 1425,820 1430,830",
    "0,900 8,915 30,930 50,905 71,800 92,690 113,510 134,390 154,320 175,258 196,225 218,202 239,194 260,220 281,295 301,400 322,490 343,590 364,642 385,642 406,632 427,617 448,612 469,622 490,636 511,636 531,619 552,604 573,603 594,600 615,578 636,525 657,425 678,340 699,327 720,365 740,475 761,580 782,675 803,750 824,785 845,803 866,780 887,715 908,630 929,540 949,462 970,427 991,437 1012,457 1033,492 1054,530 1075,560 1096,610 1117,665 1138,730 1159,790 1180,830 1200,875 1221,920 1242,990 1263,1070 1284,1130 1305,1165 1326,1171 1375,1172 1389,1164 1410,1158 1431,1125 1452,1108 1473,1135 1494,1170 1515,1225 1536,1287"]]
];

const RSI = [
  { x: 0, y: 960, kx: 1.823, ky: 3, pts: "120,400 135,235 148,232 163,215 178,206 192,203 207,242 221,210 224,258 250,400 300,350 313,255 324,232 338,400 353,427 367,260 382,232 397,210 411,270 426,425 440,450 455,445 470,456 484,478 499,391 514,481 528,486 543,370 557,456 572,466 586,258 601,213 615,373 630,406 645,423 659,457 674,473 688,487 703,260 718,245 732,392 747,407 761,459 776,463 791,478 805,492 820,400 834,445 849,282 863,266 878,216 892,205 907,345 922,418 936,343 951,310 966,293 980,227 995,446 1009,468 1038,480 1053,315 1068,422 1082,450 1097,480 1111,486 1126,345 1140,445 1155,448 1170,320 1184,267 1199,425 1213,443 1228,248 1243,350 1257,400 1272,450 1287,490 1301,420 1315,307 1330,405 1345,422 1359,435 1374,467 1388,235 1403,320 1418,248 1432,225 1447,213 1461,203 1476,203 1490,277 1505,243" },
  { x: 830, y: 1010, kx: 3, ky: 3, pts: "11,326 35,260 58,172 82,102 106,70 130,59 154,155 178,250 202,128 226,88 250,73 274,115 298,69 322,59 347,286 371,237 395,154 418,162 442,310 466,333 490,180 515,84 538,73 562,235 586,280 611,313 634,175 658,112 682,190 707,295 730,303 755,307 778,330 802,149 826,192 850,217 874,279 898,228 922,330 946,337 970,290 994,337 1018,150 1042,100 1066,66 1090,56 1114,52 1138,142 1162,88 1186,97 1210,118 1235,66 1258,160 1282,316 1306,330 1330,337 1354,343 1378,203" },
  { x: 1290, y: 1010, kx: 3, ky: 3, pts: "22,226 46,150 70,95 95,230 118,292 142,306 166,152 190,92 214,85 238,127 262,322 286,210 310,98 334,62 358,136 382,136 406,290 430,318 478,334 525,343 550,303 575,114 598,98 622,61 645,49 670,49 694,195 718,237 742,248 766,326 790,143 814,268 838,197 862,278 886,302 910,325 935,311 958,170 982,288 1006,327 1030,338 1054,275 1080,223 1102,137 1126,226 1150,143 1174,290 1198,160 1222,86 1246,200 1270,243 1295,312 1318,328 1340,340" }
];

function points(text, seg, oy) {
  return text.split(" ").map(p => {
    const [x, y] = p.split(",").map(Number);
    return (seg.x + x / seg.kx - ORIGIN.x).toFixed(1) + "," + (seg.y + y / seg.ky - oy).toFixed(1);
  }).join(" ");
}

function hline(cls, y) {
  return `<line class="${cls}" x1="0" x2="100%" y1="${y}" y2="${y}"/>`;
}

function candle(text, index, seg) {
  if (!text) return "";
  const [dir, ...raw] = text.split(",");
  const [top, bottom, high, low] = raw.map(v => v === "" ? null : Math.round(seg.y + v / seg.ky - ORIGIN.y) + 0.5);
  const x = index * BAR + 0.5;
  let d = bottom - top < 1 ? `M${x - 2} ${top}h5` : `M${x - 2} ${top}h4V${bottom}h-4z`;
  if (high != null) d += `M${x} ${high}V${top}`;
  if (low != null) d += `M${x} ${bottom}V${low}`;
  return `<path class="${dir === "u" ? "up" : "down-bar"}" d="${d}"/>`;
}

let price = hline("bid-line", 828.5);
price += hline("order-line", 723.5) + hline("order-line", 779.5);
CANDLES.forEach((block, s) => {
  block.split(";").forEach((c, i) => { price += candle(c, SEGMENTS[s].first + i, SEGMENTS[s]); });
});
LINES.forEach(([cls, parts]) => {
  price += `<polyline class="${cls}" points="${parts.map((p, s) => points(p, SEGMENTS[s], ORIGIN.y)).join(" ")}"/>`;
});
price += hline("target-line", 707);
price += `<path class="shift" d="M1730 0h10l-5 5z"/>`;
document.getElementById("price-plot").innerHTML = price;

document.getElementById("rsi-plot").innerHTML =
  hline("level", 6.5) + hline("level", 96.5) +
  `<polyline class="rsi-line" points="${RSI.map(s => points(s.pts, s, 1024)).join(" ")}"/>`;
```
